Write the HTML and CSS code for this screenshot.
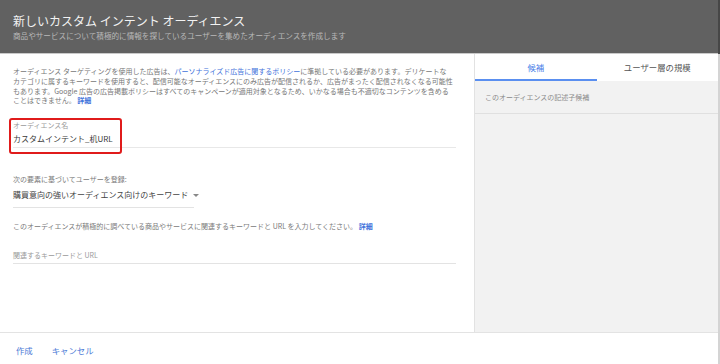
FILE: index.html
```html
<!DOCTYPE html>
<html lang="ja">
<head>
  <meta charset="UTF-8" />
  <meta name="viewport" content="width=device-width, initial-scale=1.0"/>
  <title>新しいカスタム インテント オーディエンス</title>
  <link rel="stylesheet" href="styles.css">
</head>
<body>

<div class="page">
  <div class="dialog">

    <!-- header -->
    <div class="dialog-header">
      <h1 class="dialog-title">新しいカスタム インテント オーディエンス</h1>
      <p class="dialog-subtitle">商品やサービスについて積極的に情報を探しているユーザーを集めたオーディエンスを作成します</p>
    </div>

    <div class="dialog-main">

      <!-- left: form -->
      <div class="form-pane">
        <p class="policy">オーディエンス ターゲティングを使用した広告は、<a class="link" href="#">パーソナライズド広告に関するポリシー</a>に準拠している必要があります。デリケートな<br>カテゴリに属するキーワードを使用すると、配信可能なオーディエンスにのみ広告が配信されるか、広告がまったく配信されなくなる可能性<br>もあります。Google 広告の広告掲載ポリシーはすべてのキャンペーンが適用対象となるため、いかなる場合も不適切なコンテンツを含める<br>ことはできません。 <a class="link strong" href="#">詳細</a></p>

        <div class="field name-field">
          <div class="field-label">オーディエンス名</div>
          <div class="field-value">カスタムインテント_机URL</div>
          <span class="highlight"></span>
        </div>

        <div class="hint register-label">次の要素に基づいてユーザーを登録:</div>
        <div class="select">
          <span>購買意向の強いオーディエンス向けのキーワード</span>
          <span class="caret"></span>
        </div>

        <div class="hint keyword-help">このオーディエンスが積極的に調べている商品やサービスに関連するキーワードと URL を入力してください。 <a class="link strong" href="#">詳細</a></div>
        <div class="keyword-input">関連するキーワードと URL</div>
      </div>

      <!-- right: suggestions -->
      <div class="side-pane">
        <div class="tabs">
          <div class="tab active">候補</div>
          <div class="tab">ユーザー層の規模</div>
        </div>
        <div class="suggestions">
          <div class="suggestion-row">このオーディエンスの記述子候補</div>
        </div>
      </div>

    </div>

    <!-- footer -->
    <div class="dialog-footer">
      <a class="btn" href="#">作成</a>
      <a class="btn" href="#">キャンセル</a>
    </div>

  </div>
  <div class="edge"></div>
</div>

</body>
</html>
```

FILE: styles.css
```css
html, body {
  margin: 0;
  padding: 0;
  height: 100%;
  overflow: hidden;
  background: #fff;
  font-family: "Noto Sans CJK JP", "Noto Sans", sans-serif;
}

.page {
  display: flex;
  width: 720px;
  height: 364px;
}

.dialog {
  flex: 1;
  display: flex;
  flex-direction: column;
  min-width: 0;
}

/* slim scrollbar edge on the right */
.edge {
  width: 2px;
  background: linear-gradient(#474747 0 54px, #d4d4d4 54px);
}

.dialog-header {
  height: 54px;
  box-sizing: border-box;
  padding: 13px 13px 0;
  background: #616161;
  border-bottom: 1px solid #c9c9c9;
}

.dialog-title {
  margin: 0;
  font-size: 12px;
  line-height: 16px;
  font-weight: normal;
  color: #f2f2f2;
  white-space: nowrap;
}

.dialog-subtitle {
  margin: 2px 0 0;
  font-size: 7.6px;
  line-height: 10px;
  color: #b9b9b9;
  white-space: nowrap;
}

.dialog-main {
  flex: 1;
  display: flex;
  min-height: 0;
}

.form-pane {
  width: 475px;
  box-sizing: border-box;
  padding: 13px 13px 0;
  border-right: 1px solid #e2e2e2;
}

.policy {
  margin: 0;
  font-size: 7px;
  line-height: 9.8px;
  color: #777;
  white-space: nowrap;
}

.link {
  color: #3f72db;
  text-decoration: none;
}

.link.strong {
  font-weight: bold;
}

.field {
  position: relative;
  width: 443px;
  margin-top: 14px;
  padding-bottom: 2px;
  border-bottom: 1px solid #e8e8e8;
}

.field-label {
  font-size: 7px;
  line-height: 10px;
  color: #9a9a9a;
}

.field-value {
  margin-top: 2.5px;
  font-size: 8px;
  line-height: 12px;
  color: #3a3a3a;
}

/* red annotation box round the name field */
.highlight {
  position: absolute;
  top: -2px;
  left: -4px;
  width: 109px;
  height: 32px;
  border: 2px solid #e01b1b;
  border-radius: 3px;
}

.hint {
  font-size: 7px;
  line-height: 10px;
  color: #7a7a7a;
  white-space: nowrap;
}

.register-label {
  margin-top: 26px;
}

.select {
  display: flex;
  align-items: center;
  gap: 5px;
  width: 181px;
  margin-top: 5.5px;
  padding-bottom: 6px;
  border-bottom: 1px solid #e3e3e3;
  font-size: 8px;
  line-height: 12px;
  color: #444;
  white-space: nowrap;
}

.caret {
  width: 0;
  height: 0;
  border-left: 3px solid transparent;
  border-right: 3px solid transparent;
  border-top: 3px solid #888;
}

.keyword-help {
  margin-top: 13px;
}

.keyword-input {
  width: 443px;
  margin-top: 19px;
  padding-bottom: 3px;
  border-bottom: 1px solid #e3e3e3;
  font-size: 7px;
  line-height: 10px;
  color: #9a9a9a;
}

.side-pane {
  flex: 1;
  display: flex;
  flex-direction: column;
  background: #f2f2f2;
}

.tabs {
  display: flex;
  height: 27px;
  background: #fff;
}

.tab {
  flex: 1;
  display: flex;
  align-items: center;
  justify-content: center;
  box-sizing: border-box;
  border-bottom: 2px solid transparent;
  font-size: 8.4px;
  color: #555;
}

.tab.active {
  color: #4a80e8;
  border-bottom-color: #5a8ff0;
}

.suggestion-row {
  height: 33px;
  box-sizing: border-box;
  display: flex;
  align-items: center;
  padding-left: 10px;
  border-bottom: 1px solid #e0e0e0;
  font-size: 7px;
  color: #8a8a8a;
}

.dialog-footer {
  height: 32px;
  box-sizing: border-box;
  display: flex;
  align-items: center;
  gap: 19px;
  padding: 2px 16px 0;
  border-top: 1px solid #e3e3e3;
}

.btn {
  font-size: 8.4px;
  color: #4a78d6;
  text-decoration: none;
}
```
